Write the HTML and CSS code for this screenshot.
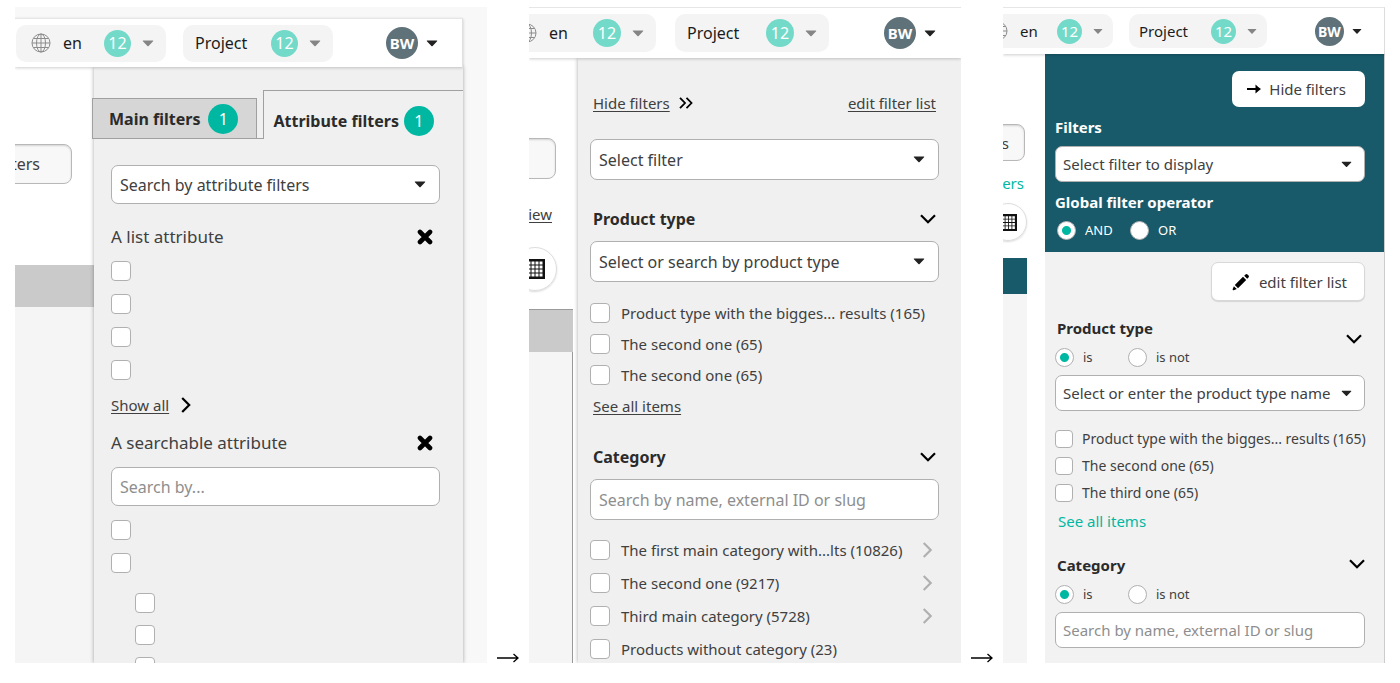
FILE: index.html
```html
<!DOCTYPE html>
<html lang="en">

<head>
    <meta charset="UTF-8">
    <meta name="viewport" content="width=device-width, initial-scale=1.0">
    <title>Filter panel iterations</title>
    <link rel="stylesheet" href="styles.css">
</head>

<body>
    <!-- shared icons -->
    <svg class="sprite" aria-hidden="true">
        <symbol id="globe" viewBox="0 0 20 20">
            <g fill="none" stroke="#8c8c8c" stroke-width="1">
                <circle cx="10" cy="10" r="9" />
                <ellipse cx="10" cy="10" rx="4.5" ry="9" />
                <path d="M10 1v18M1 10h18M2.5 5.5h15M2.5 14.5h15" />
            </g>
        </symbol>
        <symbol id="caret" viewBox="0 0 12 7">
            <path d="M1.2 0.5h9.6q0.8 0 0.3 0.7l-4.5 4.8q-0.6 0.6-1.2 0l-4.5-4.8q-0.5-0.7 0.3-0.7z" fill="currentColor" />
        </symbol>
        <symbol id="down" viewBox="0 0 16 10">
            <path d="M1 1.2l7 7 7-7" fill="none" stroke="currentColor" stroke-width="2.2" />
        </symbol>
        <symbol id="right" viewBox="0 0 10 16">
            <path d="M1.2 1l7 7-7 7" fill="none" stroke="currentColor" stroke-width="2.2" />
        </symbol>
        <symbol id="double" viewBox="0 0 14 12">
            <path d="M1 0.8l5 5.2-5 5.2M7.5 0.8l5 5.2-5 5.2" fill="none" stroke="currentColor" stroke-width="1.8" />
        </symbol>
        <symbol id="cross" viewBox="0 0 16 16">
            <path d="M3 3l10 10M13 3l-10 10" stroke="currentColor" stroke-width="4.6" stroke-linecap="round" />
        </symbol>
        <symbol id="grid" viewBox="0 0 20 20">
            <path d="M0 0h20v20h-20z" fill="#111" />
            <g fill="#fff">
                <path d="M2.5 2.5h3v3h-3zM6.500 2.500h3v3h-3zM10.500 2.500h3v3h-3zM14.500 2.500h3v3h-3z" />
                <path d="M2.5 6.500h3v3h-3zM6.500 6.500h3v3h-3zM10.500 6.500h3v3h-3zM14.500 6.500h3v3h-3z" />
                <path d="M2.5 10.500h3v3h-3zM6.500 10.500h3v3h-3zM10.500 10.500h3v3h-3zM14.500 10.500h3v3h-3z" />
                <path d="M2.5 14.500h3v3h-3zM6.500 14.500h3v3h-3zM10.500 14.500h3v3h-3zM14.500 14.500h3v3h-3z" />
            </g>
        </symbol>
        <symbol id="arrow" viewBox="0 0 14 10">
            <path d="M0 4h8.500v-3.500q3 3 5.500 4.500-2.500 1.500-5.500 4.500v-3.500h-8.500z" fill="currentColor" />
        </symbol>
        <symbol id="pencil" viewBox="0 0 18 18">
            <path d="M2.800 12l8.200-8.200 3.200 3.200-8.200 8.200zM12.200 2.800l1.300-1.300q1-0.900 2-0.100l1.100 1.100q0.800 1-0.100 2l-1.300 1.300zM1.900 13.200l2.900 2.900-3 1.200q-1.500 0.200-1.100-1.200z" fill="currentColor" />
        </symbol>
        <symbol id="long-arrow" viewBox="0 0 22 10">
            <path d="M0 5h21M16.500 1l4.500 4-4.500 4" fill="none" stroke="currentColor" stroke-width="1.300" />
        </symbol>
    </svg>

    <!-- first version: tabs -->
    <section class="stage stage-tabs">
        <header class="topbar">
            <button class="pill"><svg class="globe"><use href="#globe" /></svg><span class="lang">en</span><span class="count">12</span><svg class="caret"><use href="#caret" /></svg></button>
            <button class="pill pill-project"><span>Project</span><span class="count">12</span><svg class="caret"><use href="#caret" /></svg></button>
            <button class="user"><span class="avatar">BW</span><svg class="caret"><use href="#caret" /></svg></button>
        </header>
        <div class="content">
            <main class="page">
                <button class="page-button">ters</button>
                <div class="page-head"></div>
                <div class="page-body"></div>
            </main>
            <aside class="panel">
                <div class="tabs" role="tablist">
                    <button class="tab" role="tab" aria-selected="false">Main filters <span class="badge">1</span></button>
                    <span class="tab-gap"></span>
                    <button class="tab tab-active" role="tab" aria-selected="true">Attribute filters <span class="badge">1</span></button>
                </div>
                <div class="panel-body">
                    <div class="select">
                        <select aria-label="Attribute filter"><option>Search by attribute filters</option></select>
                        <svg class="caret"><use href="#caret" /></svg>
                    </div>
                    <div class="title"><span>A list attribute</span><button class="icon-button" aria-label="Remove"><svg class="cross"><use href="#cross" /></svg></button></div>
                    <div class="checks">
                        <input type="checkbox" aria-label="Option 1">
                        <input type="checkbox" aria-label="Option 2">
                        <input type="checkbox" aria-label="Option 3">
                        <input type="checkbox" aria-label="Option 4">
                    </div>
                    <div class="more"><a href="#">Show all</a><svg class="right"><use href="#right" /></svg></div>
                    <div class="title title-next"><label for="search-attr">A searchable attribute</label><button class="icon-button" aria-label="Remove"><svg class="cross"><use href="#cross" /></svg></button></div>
                    <input class="text" type="text" id="search-attr" placeholder="Search by...">
                    <div class="checks checks-tree">
                        <input type="checkbox" aria-label="Value 1">
                        <input type="checkbox" aria-label="Value 2">
                        <div class="sub">
                            <input type="checkbox" aria-label="Value 2.1">
                            <input type="checkbox" aria-label="Value 2.2">
                            <input type="checkbox" aria-label="Value 2.3">
                        </div>
                    </div>
                </div>
            </aside>
        </div>
    </section>

    <div class="next"><svg><use href="#long-arrow" /></svg></div>

    <!-- second version: one list -->
    <section class="stage stage-list">
        <header class="topbar">
            <button class="pill"><svg class="globe"><use href="#globe" /></svg><span class="lang">en</span><span class="count">12</span><svg class="caret"><use href="#caret" /></svg></button>
            <button class="pill pill-project"><span>Project</span><span class="count">12</span><svg class="caret"><use href="#caret" /></svg></button>
            <button class="user"><span class="avatar">BW</span><svg class="caret"><use href="#caret" /></svg></button>
        </header>
        <div class="content">
            <main class="page">
                <button class="page-button" aria-label="Search"></button>
                <a class="page-link" href="#">iew</a>
                <button class="view" aria-label="Table"><svg><use href="#grid" /></svg></button>
                <div class="page-head"></div>
                <div class="page-body"></div>
            </main>
            <aside class="panel">
                <div class="links">
                    <a href="#">Hide filters</a>
                    <svg class="double"><use href="#double" /></svg>
                    <a class="edit" href="#">edit filter list</a>
                </div>
                <div class="select">
                    <select aria-label="Filter"><option>Select filter</option></select>
                    <svg class="caret"><use href="#caret" /></svg>
                </div>
                <div class="title"><label for="type-2">Product type</label><button class="icon-button" aria-label="Collapse"><svg class="down"><use href="#down" /></svg></button></div>
                <div class="select">
                    <select id="type-2"><option>Select or search by product type</option></select>
                    <svg class="caret"><use href="#caret" /></svg>
                </div>
                <div class="checks">
                    <label><input type="checkbox">Product type with the bigges... results (165)</label>
                    <label><input type="checkbox">The second one (65)</label>
                    <label><input type="checkbox">The second one (65)</label>
                </div>
                <div class="more"><a href="#">See all items</a></div>
                <div class="title"><label for="category-2">Category</label><button class="icon-button" aria-label="Collapse"><svg class="down"><use href="#down" /></svg></button></div>
                <input class="text" type="text" id="category-2" placeholder="Search by name, external ID or slug">
                <div class="checks checks-category">
                    <label><input type="checkbox">The first main category with...lts (10826)<svg class="right"><use href="#right" /></svg></label>
                    <label><input type="checkbox">The second one (9217)<svg class="right"><use href="#right" /></svg></label>
                    <label><input type="checkbox">Third main category (5728)<svg class="right"><use href="#right" /></svg></label>
                    <label><input type="checkbox">Products without category (23)</label>
                </div>
            </aside>
        </div>
    </section>

    <div class="next"><svg><use href="#long-arrow" /></svg></div>

    <!-- final version: operators -->
    <section class="stage stage-final">
        <header class="topbar">
            <button class="pill"><svg class="globe"><use href="#globe" /></svg><span class="lang">en</span><span class="count">12</span><svg class="caret"><use href="#caret" /></svg></button>
            <button class="pill pill-project"><span>Project</span><span class="count">12</span><svg class="caret"><use href="#caret" /></svg></button>
            <button class="user"><span class="avatar">BW</span><svg class="caret"><use href="#caret" /></svg></button>
        </header>
        <div class="content">
            <main class="page">
                <button class="page-button">s</button>
                <a class="page-link" href="#">ers</a>
                <button class="view" aria-label="Table"><svg><use href="#grid" /></svg></button>
                <div class="page-head"></div>
                <div class="page-body"></div>
            </main>
            <aside class="panel">
                <div class="global">
                    <button class="action"><svg class="arrow"><use href="#arrow" /></svg>Hide filters</button>
                    <label class="global-label" for="filter-3">Filters</label>
                    <div class="select">
                        <select id="filter-3"><option>Select filter to display</option></select>
                        <svg class="caret"><use href="#caret" /></svg>
                    </div>
                    <div class="global-label">Global filter operator</div>
                    <div class="radios">
                        <label><input type="radio" name="operator" checked>AND</label>
                        <label><input type="radio" name="operator">OR</label>
                    </div>
                </div>
                <div class="panel-body">
                    <button class="action action-edit"><svg class="pencil"><use href="#pencil" /></svg>edit filter list</button>
                    <div class="group group-type">
                        <div>
                            <label class="group-label" for="type-3">Product type</label>
                            <div class="radios">
                                <label><input type="radio" name="type" checked>is</label>
                                <label><input type="radio" name="type">is not</label>
                            </div>
                        </div>
                        <button class="icon-button" aria-label="Collapse"><svg class="down"><use href="#down" /></svg></button>
                    </div>
                    <div class="select">
                        <select id="type-3"><option>Select or enter the product type name</option></select>
                        <svg class="caret"><use href="#caret" /></svg>
                    </div>
                    <div class="checks">
                        <label><input type="checkbox">Product type with the bigges... results (165)</label>
                        <label><input type="checkbox">The second one (65)</label>
                        <label><input type="checkbox">The third one (65)</label>
                    </div>
                    <div class="more"><a href="#">See all items</a></div>
                    <div class="group">
                        <div>
                            <label class="group-label" for="category-3">Category</label>
                            <div class="radios">
                                <label><input type="radio" name="category" checked>is</label>
                                <label><input type="radio" name="category">is not</label>
                            </div>
                        </div>
                        <button class="icon-button" aria-label="Collapse"><svg class="down"><use href="#down" /></svg></button>
                    </div>
                    <input class="text" type="text" id="category-3" placeholder="Search by name, external ID or slug">
                </div>
            </aside>
        </div>
    </section>
</body>

</html>
```
FILE: styles.css
```css
* {
    box-sizing: border-box;
}

body {
    margin: 0;
    padding: 7px 15px 20px;
    height: 100vh;
    display: flex;
    background-color: white;
    color: #404040;
    font-family: "Noto Sans", sans-serif;
    font-size: 16px;
    line-height: 24px;
}

button,
select,
input {
    margin: 0;
    font: inherit;
    color: inherit;
}

button {
    padding: 0;
    border: none;
    background: none;
}

a {
    color: inherit;
    text-underline-offset: 2px;
}

svg {
    flex: none;
    display: block;
}

.sprite {
    position: absolute;
    width: 0;
    height: 0;
}

/* stages */

.stage {
    min-width: 0;
    display: flex;
    flex-direction: column;
    overflow: hidden;
}

.stage-tabs {
    flex: 448 1 0;
    padding: 11px 24px 0 0;
    background-color: #f8f8f8;
}

.stage-list {
    flex: 432 1 0;
}

.stage-final {
    flex: 382 1 0;
}

.next {
    width: 42px;
    flex: none;
    display: flex;
    justify-content: center;
    align-items: flex-end;
    color: black;
}

.next svg {
    width: 22px;
    height: 10px;
}

/* top bar */

.topbar {
    flex: none;
    height: 49px;
    display: flex;
    justify-content: flex-end;
    align-items: center;
    background-color: white;
    border-top: 1px solid #e6e6e6;
    box-shadow: 0 1px 3px rgba(0, 0, 0, 0.2);
    color: #1c1c1c;
    position: relative;
    z-index: 2;
}

.stage-tabs .topbar {
    border-right: 1px solid #e0e0e0;
}

.pill {
    flex: none;
    width: 150px;
    height: 37px;
    margin-right: 17px;
    padding: 0 12px;
    display: flex;
    align-items: center;
    border-radius: 10px;
    background-color: #f4f4f4;
}

.globe {
    width: 20px;
    height: 20px;
    margin: 0 12px 0 3px;
}

.count {
    width: 27px;
    height: 27px;
    margin-left: auto;
    border-radius: 50%;
    background-color: #73dac9;
    color: white;
    line-height: 27px;
    text-align: center;
}

.pill .caret {
    margin-left: 11px;
    color: #858585;
}

.caret {
    width: 12px;
    height: 7px;
    color: #222;
}

.user {
    flex: none;
    margin: 0 24px 0 36px;
    display: flex;
    align-items: center;
    gap: 8px;
}

.avatar {
    width: 32px;
    height: 32px;
    border-radius: 50%;
    background-color: #5f7279;
    color: white;
    font-size: 15px;
    font-weight: bold;
    line-height: 32px;
    text-align: center;
}

.stage-list .topbar {
    height: 51px;
}

.stage-list .pill {
    width: 154px;
    height: 38px;
    margin-right: 19px;
}

.stage-list .count {
    width: 28px;
    height: 28px;
    line-height: 28px;
}

.stage-list .user {
    margin-right: 25px;
}

.stage-final .topbar {
    height: 47px;
    font-size: 15px;
    border-right: 1px solid #ddd;
}

.stage-final .pill {
    width: 138px;
    height: 34px;
    margin-right: 16px;
    padding: 0 10px;
}

.stage-final .count {
    width: 25px;
    height: 25px;
    line-height: 25px;
}

.stage-final .avatar {
    width: 29px;
    height: 29px;
    font-size: 14px;
    line-height: 29px;
}

.stage-final .user {
    margin: 0 22px 0 32px;
}

.stage-final .topbar .caret {
    width: 10px;
}

/* page behind the panel */

.content {
    flex: 1;
    min-height: 0;
    display: flex;
}

.page {
    flex: none;
    width: 79px;
    padding-top: 77px;
    display: flex;
    flex-direction: column;
    align-items: flex-end;
    background-color: white;
    overflow: hidden;
}

.page-button {
    flex: none;
    width: 120px;
    height: 40px;
    margin-right: 22px;
    padding-right: 31px;
    border: 1px solid #b8b8b8;
    border-radius: 8px;
    box-shadow: inset 0 1px 2px rgba(0, 0, 0, 0.15);
    background-color: #f8f8f8;
    text-align: right;
}

.page-head {
    flex: none;
    width: 100%;
    height: 42px;
    margin-top: 81px;
    background-color: #cacaca;
}

.page-body {
    flex: 1;
    width: 100%;
    background-color: #f5f5f5;
}

.page-link {
    margin: 24px 26px 0 0;
    font-size: 15px;
    line-height: 22px;
}

.view {
    flex: none;
    width: 44px;
    height: 44px;
    margin: 22px 21px 0 0;
    display: flex;
    justify-content: center;
    align-items: center;
    border: 1px solid #ddd;
    border-radius: 50%;
    box-shadow: 0 1px 2px rgba(0, 0, 0, 0.15);
}

.view svg {
    width: 20px;
    height: 20px;
}

.stage-list .page {
    width: 49px;
    padding: 80px 5px 0 0;
}

.stage-list .page-button {
    margin-right: 17px;
    height: 41px;
}

.stage-list .page-link {
    margin-right: 21px;
}

.stage-list .view {
    margin-right: 16px;
}

.stage-list .page-head {
    margin-top: 18px;
    border-top: 1px solid #9a9a9a;
    height: 43px;
}

.stage-list .page-body {
    border-right: 1px solid #999;
}

.stage-final .page {
    width: 42px;
    padding: 70px 18px 0 0;
}

.stage-final .page-button {
    height: 37px;
    margin-right: 2px;
    padding-right: 15px;
    font-size: 15px;
}

.stage-final .page-link {
    margin: 11px 3px 0 0;
    color: #00b8a2;
    text-decoration: none;
}

.stage-final .view {
    width: 38px;
    height: 38px;
    margin: 9px 0 0;
}

.stage-final .view svg {
    width: 17px;
    height: 17px;
}

.stage-final .page-head {
    height: 36px;
    margin-top: 17px;
    background-color: #185a6a;
}

/* panel */

.panel {
    flex: 1;
    min-width: 0;
    background-color: #f0f0f0;
    box-shadow: 0 0 4px rgba(0, 0, 0, 0.35);
    position: relative;
}

.stage-tabs .panel-body {
    padding: 26px 23px 0 17px;
}

.stage-list .panel {
    padding: 33px 22px 0 12px;
}

.stage-final .panel {
    font-size: 14px;
    line-height: 20px;
    background-color: #f2f2f2;
    box-shadow: none;
    border-right: 1px solid #ccc;
}

.stage-final .panel-body {
    padding: 10px 19px 0 10px;
}

.tabs {
    padding-top: 23px;
    display: flex;
    align-items: flex-end;
    color: #2b2b2b;
    font-weight: bold;
}

.tab {
    height: 41px;
    margin-left: -2px;
    padding: 0 18px 0 16px;
    display: flex;
    align-items: center;
    gap: 8px;
    border: 1px solid #a0a0a0;
    background-color: #d6d6d6;
    white-space: nowrap;
}

.tab-gap {
    width: 6px;
    height: 41px;
    border-bottom: 1px solid #a0a0a0;
}

.tab-active {
    flex: 1;
    height: 49px;
    margin: 0;
    padding: 12px 0 0 9px;
    gap: 5px;
    border-width: 1px 0 0 1px;
    background-color: #f0f0f0;
}

.badge {
    width: 30px;
    height: 30px;
    border-radius: 50%;
    background-color: #00b8a2;
    color: white;
    font-weight: normal;
    line-height: 30px;
    text-align: center;
}

.links {
    height: 24px;
    margin-bottom: 24px;
    padding: 0 3px;
    display: flex;
    align-items: center;
    font-size: 15px;
}

.double {
    width: 14px;
    height: 12px;
    margin-left: 9px;
    color: black;
}

.edit {
    margin-left: auto;
}

.title {
    height: 24px;
    margin: 21px 0 12px;
    display: flex;
    justify-content: space-between;
    align-items: center;
    font-size: 17px;
}

.title-next {
    margin-top: 14px;
}

.stage-tabs .icon-button {
    margin-right: 7px;
}

.stage-list .title {
    margin: 27px 0 10px;
    padding: 0 3px;
    color: #2b2b2b;
    font-size: 16px;
    font-weight: bold;
}

.icon-button {
    color: black;
}

.cross {
    width: 16px;
    height: 16px;
}

.down {
    width: 16px;
    height: 10px;
}

.right {
    width: 10px;
    height: 16px;
}

/* fields */

.select {
    display: flex;
    align-items: center;
    position: relative;
}

.select .caret {
    position: absolute;
    right: 14px;
    pointer-events: none;
}

.stage-final .select .caret {
    right: 13px;
    width: 11px;
}

.select select,
.text {
    width: 100%;
    height: 39px;
    padding: 0 8px;
    display: block;
    border: 1px solid #b0b0b0;
    border-radius: 7px;
    background-color: white;
    appearance: none;
}

.stage-list .select select,
.stage-list .text {
    height: 41px;
}

.stage-final .select select,
.stage-final .text {
    height: 36px;
    padding: 0 7px;
    font-size: 15px;
}

.text::placeholder {
    color: #8e8e8e;
}

.checks {
    display: flex;
    flex-direction: column;
    gap: 13px;
}

.checks label,
.radios label {
    display: flex;
    align-items: center;
    height: 20px;
    gap: 11px;
    white-space: nowrap;
}

.checks-tree {
    margin-top: 14px;
}

.sub {
    margin-top: 7px;
    padding-left: 24px;
    display: flex;
    flex-direction: column;
    gap: 12px;
}

.stage-list .checks {
    margin-top: 21px;
    gap: 11px;
    font-size: 15px;
}

.stage-list .checks-category {
    margin-top: 20px;
    gap: 13px;
}

.checks .right {
    width: 11px;
    margin: 0 6px 0 auto;
    color: #b0b0b0;
}

.stage-final .checks {
    margin-top: 19px;
    gap: 9px;
}

.stage-final .checks label,
.radios label {
    height: 18px;
    gap: 9px;
}

input[type="checkbox"] {
    flex: none;
    width: 20px;
    height: 20px;
    border: 1px solid #b0b0b0;
    border-radius: 4px;
    background-color: white;
    appearance: none;
}

.stage-final input[type="checkbox"] {
    width: 18px;
    height: 18px;
}

input[type="radio"] {
    flex: none;
    width: 19px;
    height: 19px;
    border: 1px solid #b0b0b0;
    border-radius: 50%;
    background-color: white;
    appearance: none;
}

input[type="radio"]:checked {
    background-image: radial-gradient(circle, #00b8a2 4px, white 5px);
}

.radios {
    display: flex;
    font-size: 13px;
}

.radios label {
    width: 73px;
}

.more {
    height: 24px;
    margin-top: 13px;
    display: flex;
    align-items: center;
    gap: 12px;
    font-size: 15px;
}

.more .right {
    color: black;
}

.stage-list .more {
    margin-top: 9px;
    padding-left: 3px;
}

.stage-final .more {
    height: 20px;
    margin-top: 9px;
    padding-left: 3px;
}

.stage-final .more a {
    color: #00b8a2;
    text-decoration: none;
}

/* final version */

.global {
    padding: 17px 19px 13px 10px;
    background-color: #185a6a;
    color: white;
}

.global .select {
    margin: 9px 0 10px;
    color: #404040;
}

.action {
    width: 133px;
    height: 36px;
    margin: 0 0 10px auto;
    padding-right: 19px;
    display: flex;
    justify-content: flex-end;
    align-items: center;
    gap: 8px;
    border-radius: 7px;
    background-color: white;
    color: #404040;
    font-size: 15px;
}

.action-edit {
    width: 154px;
    height: 39px;
    margin-bottom: 17px;
    padding-right: 17px;
    gap: 9px;
    border: 1px solid #d8d8d8;
    box-shadow: 0 1px 1px rgba(0, 0, 0, 0.12);
}

.arrow {
    width: 14px;
    height: 10px;
    color: black;
}

.pencil {
    width: 18px;
    height: 18px;
    color: black;
}

.global-label,
.group-label {
    display: block;
    font-size: 15px;
    font-weight: bold;
}

.global .radios {
    margin-top: 9px;
    padding-left: 2px;
}

.group {
    margin: 24px 0 9px;
    display: flex;
    justify-content: space-between;
    align-items: flex-start;
}

.group-type {
    margin-top: 0;
    padding-right: 3px;
    align-items: center;
}

.group-label {
    padding-left: 2px;
    color: #2b2b2b;
}

.group .radios {
    margin-top: 10px;
}

.group .icon-button {
    padding: 4px 0 0;
}

.group-type .icon-button {
    padding: 0 0 6px;
}
```
